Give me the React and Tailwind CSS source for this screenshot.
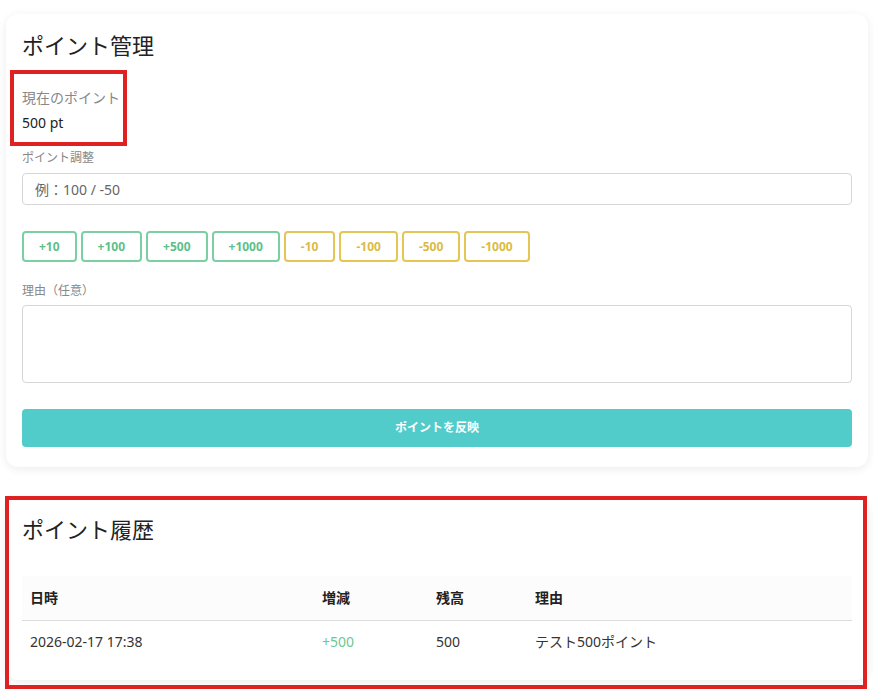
import React from 'react';

const FONT = { fontFamily: '"Noto Sans", "Noto Sans CJK JP", sans-serif' };

const plus = ['+10', '+100', '+500', '+1000'];
const minus = ['-10', '-100', '-500', '-1000'];

const App = () => {
    return (
        <div className="relative min-h-[689px] bg-white px-[6px] pt-[14px] text-[#222]" style={FONT}>
            {/* Point management */}
            <div className="rounded-xl bg-white px-4 pt-4 pb-5 shadow-[0_2px_10px_rgba(0,0,0,0.08)]">
                <h2 className="text-[22px] leading-[30px] text-[#222]">ポイント管理</h2>

                <div className="mt-[28px]">
                    <p className="text-sm leading-5 text-[#888]">現在のポイント</p>
                    <p className="mt-[5px] text-sm leading-5 text-[#222]">500 pt</p>
                </div>

                <p className="mt-[17px] text-xs leading-4 text-[#888]">ポイント調整</p>
                <input
                    className="mt-[7px] h-[32px] w-full rounded border border-[#d6d6d6] px-3 text-sm text-[#444] placeholder-[#666] outline-none"
                    placeholder="例：100 / -50"
                />

                <div className="mt-[26px] flex gap-1">
                    {plus.map((v) => (
                        <button key={v} className="h-[31px] rounded border-2 border-[#7ccfa3] px-[15px] text-xs font-bold text-[#5cbf8a]">
                            {v}
                        </button>
                    ))}
                    {minus.map((v) => (
                        <button key={v} className="h-[31px] rounded border-2 border-[#e3c655] px-[15px] text-xs font-bold text-[#dbbb44]">
                            {v}
                        </button>
                    ))}
                </div>

                <p className="mt-[21px] text-xs leading-4 text-[#888]">理由（任意）</p>
                <textarea className="mt-[6px] block h-[78px] w-full resize-none rounded border border-[#d6d6d6] outline-none" />

                <button className="mt-[26px] h-[38px] w-full rounded bg-[#52cbcb] text-xs font-bold text-white">
                    ポイントを反映
                </button>
            </div>

            {/* Point history */}
            <div className="mt-[31px] rounded-xl bg-white px-4 pt-4 pb-4 shadow-[0_2px_10px_rgba(0,0,0,0.08)]">
                <h2 className="text-[22px] leading-[30px] text-[#222]">ポイント履歴</h2>
                <table className="mt-[32px] w-full text-left text-sm">
                    <thead>
                        <tr className="border-b border-[#dcdcdc] bg-[#fcfcfc]">
                            <th className="h-[44px] w-[292px] px-2 font-bold">日時</th>
                            <th className="w-[114px] px-2 font-bold">増減</th>
                            <th className="w-[99px] px-2 font-bold">残高</th>
                            <th className="px-2 font-bold">理由</th>
                        </tr>
                    </thead>
                    <tbody>
                        <tr>
                            <td className="h-[44px] px-2 text-[#333]">2026-02-17 17:38</td>
                            <td className="px-2 text-[#6cc795]">+500</td>
                            <td className="px-2 text-[#333]">500</td>
                            <td className="px-2 text-[#333]">テスト500ポイント</td>
                        </tr>
                    </tbody>
                </table>
            </div>

            {/* annotation boxes */}
            <div className="pointer-events-none absolute left-[10px] top-[70px] h-[76px] w-[117px] border-[4px] border-[#e02121]" />
            <div className="pointer-events-none absolute left-[5px] top-[496px] h-[193px] w-[862px] border-[4px] border-[#e02121]" />
        </div>
    );
};

export default App;
